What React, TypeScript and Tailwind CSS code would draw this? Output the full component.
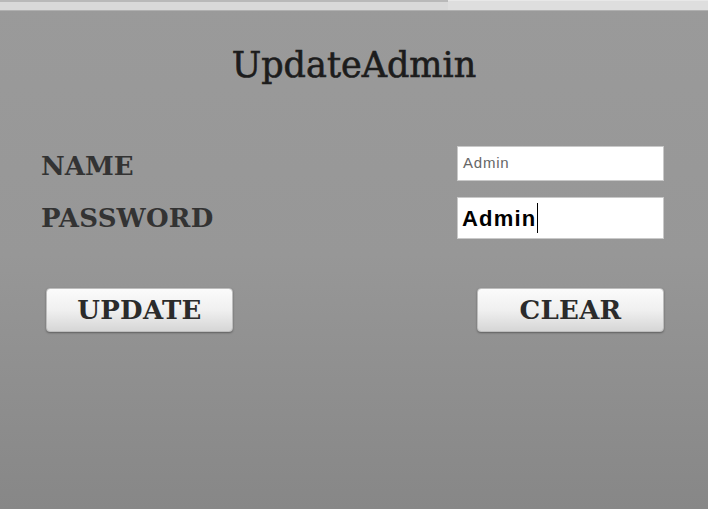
import React from 'react';

const serif = { fontFamily: '"DejaVu Serif", "Liberation Serif", serif' };
const sans = { fontFamily: '"Liberation Sans", Arial, sans-serif' };

export default function App() {
  return (
    <div className="w-[708px] h-[509px] flex flex-col overflow-hidden bg-gradient-to-b from-[#9a9a9a] via-[#979797] to-[#878787]">
      {/* window strip */}
      <div className="flex h-[10px] shrink-0">
        <div className="w-[448px] border-t-2 border-[#b9b9b9] bg-[#d9d9d9]" />
        <div className="flex-1 border-t border-[#e8e8e8] bg-[#dedede]" />
      </div>
      <div className="h-px bg-[#b0b0b0]" />

      <div className="flex flex-col" style={serif}>
        <h1 className="mt-[34px] text-center text-[35px] leading-[40px] text-[#1c1c1c] [-webkit-text-stroke:0.6px_#1c1c1c]">
          UpdateAdmin
        </h1>

        <div className="mt-[61px] flex flex-col pl-[41px] pr-[44px]">
          <div className="flex items-center justify-between h-[35px]">
            <span className="text-[26px] font-bold text-[#333] pt-[6px]">NAME</span>
            <div className="w-[207px] h-[35px] bg-white border border-[#c9c9c9] flex items-center pl-[5px]">
              <span className="text-[15px] text-[#666] tracking-[0.8px]" style={sans}>Admin</span>
            </div>
          </div>
          <div className="flex items-center justify-between h-[42px] mt-[16px]">
            <span className="text-[26px] font-bold text-[#333] tracking-[0.2px]">PASSWORD</span>
            <div className="w-[207px] h-[42px] bg-white border border-[#c9c9c9] flex items-center pl-[4px]">
              <span className="text-[22px] font-bold text-black tracking-[1.2px]" style={sans}>Admin</span>
              <span className="ml-[1px] w-px h-[30px] bg-black" />
            </div>
          </div>
        </div>

        <div className="mt-[49px] flex justify-between pl-[46px] pr-[44px]">
          <button className="w-[187px] h-[44px] rounded-[4px] bg-gradient-to-b from-[#fbfbfb] via-[#f0f0f0] to-[#d6d6d6] border border-[#bdbdbd] shadow-[0_1px_2px_rgba(0,0,0,0.35)] text-[26px] font-bold text-[#2b2b2b] tracking-[0.3px]">
            UPDATE
          </button>
          <button className="w-[187px] h-[44px] rounded-[4px] bg-gradient-to-b from-[#fbfbfb] via-[#f0f0f0] to-[#d6d6d6] border border-[#bdbdbd] shadow-[0_1px_2px_rgba(0,0,0,0.35)] text-[26px] font-bold text-[#2b2b2b] tracking-[0.3px]">
            CLEAR
          </button>
        </div>
      </div>
    </div>
  );
}
